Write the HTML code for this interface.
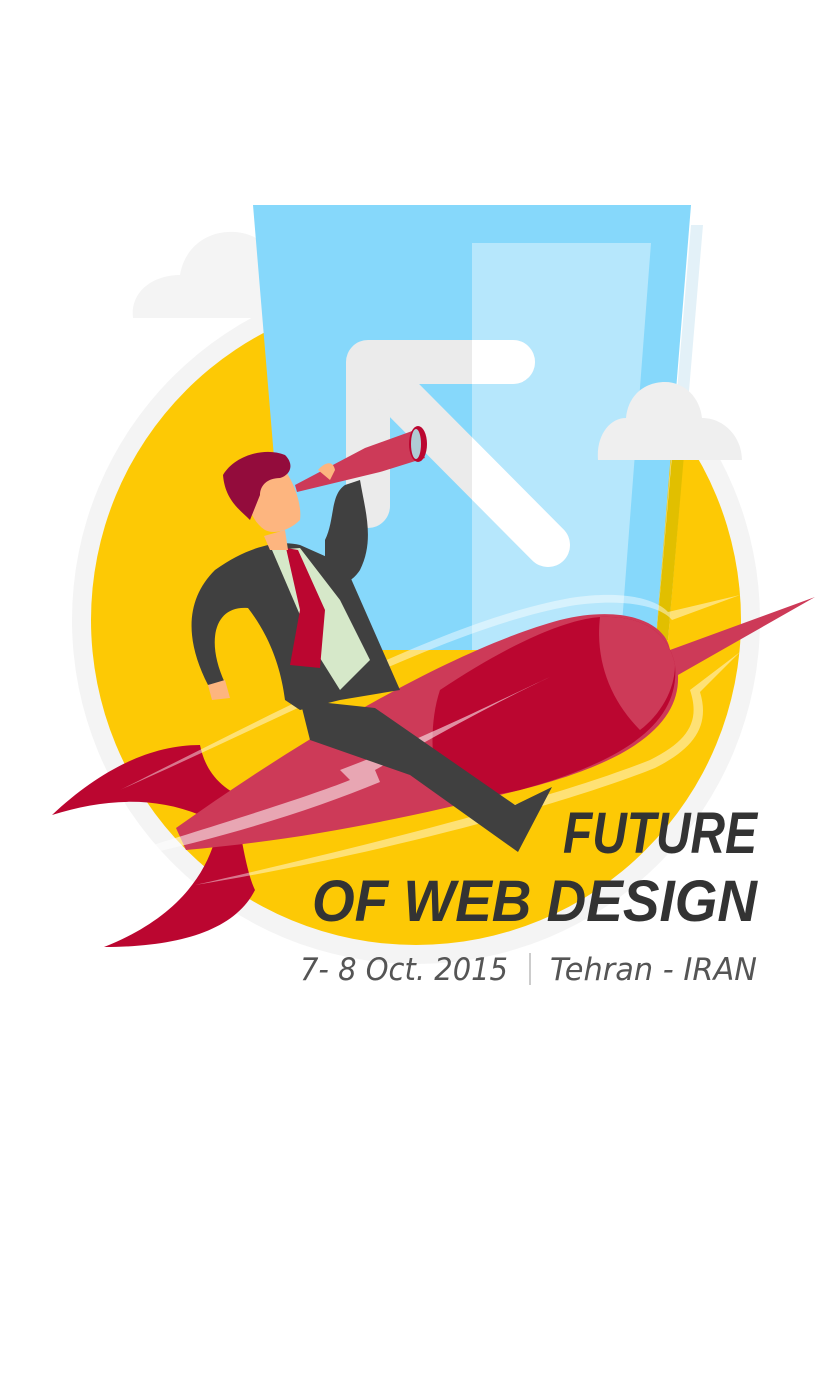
<!DOCTYPE html>
<html><head><meta charset="utf-8"><style>
html,body{margin:0;padding:0;background:#fff;width:830px;height:1400px;overflow:hidden}
svg{display:block}
</style></head><body>
<svg width="830" height="1400" viewBox="0 0 830 1400" xmlns="http://www.w3.org/2000/svg">
<circle cx="416" cy="620" r="344" fill="#f4f4f4"/>
<circle cx="416" cy="620" r="325" fill="#fdc905"/>
<!-- left cloud -->
<path d="M133 318 C130 290 155 275 180 275 C185 245 210 230 235 232 C265 234 285 260 285 290 L285 318 Z" fill="#f4f4f4"/>
<!-- shadow panel right -->
<polygon points="691,225 703,225 668,640 656,640" fill="#e3f1f8"/>
<polygon points="672,455 684,455 668,640 656,640" fill="#e1bf00"/>
<!-- blue trapezoid -->
<polygon points="253,205 691,205 655,650 290,650" fill="#86d8fb"/>
<polygon points="472,243 651,243 620,650 472,650" fill="#b6e7fc"/>
<!-- arrow -->
<path d="M368 506 L368 362 L513 362" fill="none" stroke="#ebebeb" stroke-width="44" stroke-linecap="round" stroke-linejoin="round"/>
<path d="M400 396 L548 545" stroke="#ebebeb" stroke-width="44" stroke-linecap="round"/>
<clipPath id="cr"><rect x="472" y="300" width="200" height="300"/></clipPath>
<g clip-path="url(#cr)"><path d="M368 362 L513 362" stroke="#fff" stroke-width="44" stroke-linecap="round"/><path d="M400 396 L548 545" stroke="#fff" stroke-width="44" stroke-linecap="round"/></g>
<!-- right cloud -->
<path d="M598 460 C596 435 610 418 626 418 C628 395 645 382 665 382 C685 382 700 398 702 418 C725 418 742 438 742 460 Z" fill="#efefef"/>
<!-- rocket fins -->
<path d="M52 815 C100 770 150 745 200 745 C205 770 220 790 250 800 L200 815 C150 795 100 800 52 815 Z" fill="#bb0630"/>
<path d="M104 947 C160 925 200 890 215 840 L240 830 C245 860 250 880 255 890 C235 930 180 947 104 947 Z" fill="#bb0630"/>
<!-- rocket body -->
<path d="M176 828 C300 740 450 650 560 620 C620 605 665 620 670 650 L815 597 L678 675 C680 720 640 760 520 790 C400 820 300 840 186 850 Z" fill="#cd3a58"/>
<path d="M440 690 C500 650 560 620 600 617 C640 615 668 630 675 665 C680 720 630 760 520 790 C490 797 460 800 440 790 C430 760 430 720 440 690 Z" fill="#bb0630"/>
<path d="M600 617 C640 615 668 630 675 665 C675 690 660 715 640 730 C610 700 595 660 600 617 Z" fill="#cd3a58"/>
<!-- streaks -->
<path d="M80 868 C200 830 300 800 350 780 L340 770 C420 740 500 700 550 677 C480 710 420 745 375 770 L380 782 C300 815 200 845 80 868 Z" fill="#fff" opacity="0.55"/>
<path d="M120 790 C300 700 450 620 570 598 C620 590 655 598 668 612 L740 595 L672 620 C660 605 620 598 570 606 C450 628 300 710 120 790 Z" fill="#fff" opacity="0.45"/>
<path d="M195 885 C350 850 550 800 650 760 C690 740 700 720 690 690 L740 652 L700 692 C710 725 695 748 655 768 C550 810 350 860 195 885 Z" fill="#fff" opacity="0.45"/>
<!-- man -->
<path d="M300 700 L375 708 L515 805 L552 787 L518 852 L410 775 L310 740 Z" fill="#404040"/>
<path d="M215 570 C250 545 280 540 300 545 L345 565 L400 690 L340 700 L300 710 L285 700 C280 660 265 630 248 608 C215 605 205 640 225 683 L208 685 C185 640 185 600 215 570 Z" fill="#404040"/>
<path d="M325 540 C335 520 330 495 345 485 L360 480 C365 510 375 540 360 570 C350 585 340 585 325 580 Z" fill="#404040"/>
<path d="M272 550 L300 548 L340 600 L370 660 L340 690 L315 650 Z" fill="#d6e8c9"/>
<path d="M286 548 L298 550 L325 610 L320 668 L290 665 L300 610 Z" fill="#bb0630"/>
<path d="M248 480 C250 465 270 462 285 470 C295 485 302 505 300 520 C290 530 275 535 265 530 C250 520 245 500 248 480 Z" fill="#fdb57f"/>
<path d="M223 475 C235 455 265 447 285 455 C295 465 290 475 280 478 C268 478 260 485 260 495 L250 520 C240 510 225 500 223 475 Z" fill="#930c3c"/>
<path d="M264 536 L285 530 L288 550 L270 550 Z" fill="#fdb57f"/>
<path d="M295 485 L365 448 L415 430 L425 458 L380 472 L297 492 Z" fill="#cd3a58"/>
<ellipse cx="418" cy="444" rx="9" ry="18" fill="#bb0630"/>
<ellipse cx="416" cy="444" rx="5" ry="15" fill="#b0ccd4"/>
<path d="M318 470 C325 462 333 460 335 470 L330 480 Z" fill="#fdb57f"/>
<path d="M208 685 L225 680 L230 698 L212 700 Z" fill="#fdb57f"/>
<!-- text -->
<g font-family="Liberation Sans, sans-serif" font-weight="bold" font-style="italic" fill="#333">
<text x="563" y="853" font-size="58" textLength="194" lengthAdjust="spacingAndGlyphs">FUTURE</text>
<text x="312" y="921" font-size="58" textLength="445" lengthAdjust="spacingAndGlyphs">OF WEB DESIGN</text>
</g>
<g font-family="DejaVu Sans, sans-serif" font-style="italic" font-weight="300" fill="#555">
<text x="300" y="980" font-size="31" textLength="208" lengthAdjust="spacingAndGlyphs">7- 8 Oct. 2015</text>
<text x="550" y="980" font-size="31" textLength="207" lengthAdjust="spacingAndGlyphs">Tehran - IRAN</text>
</g>
<rect x="529" y="953" width="2" height="32" fill="#ccc"/>
</svg>
</body></html>
